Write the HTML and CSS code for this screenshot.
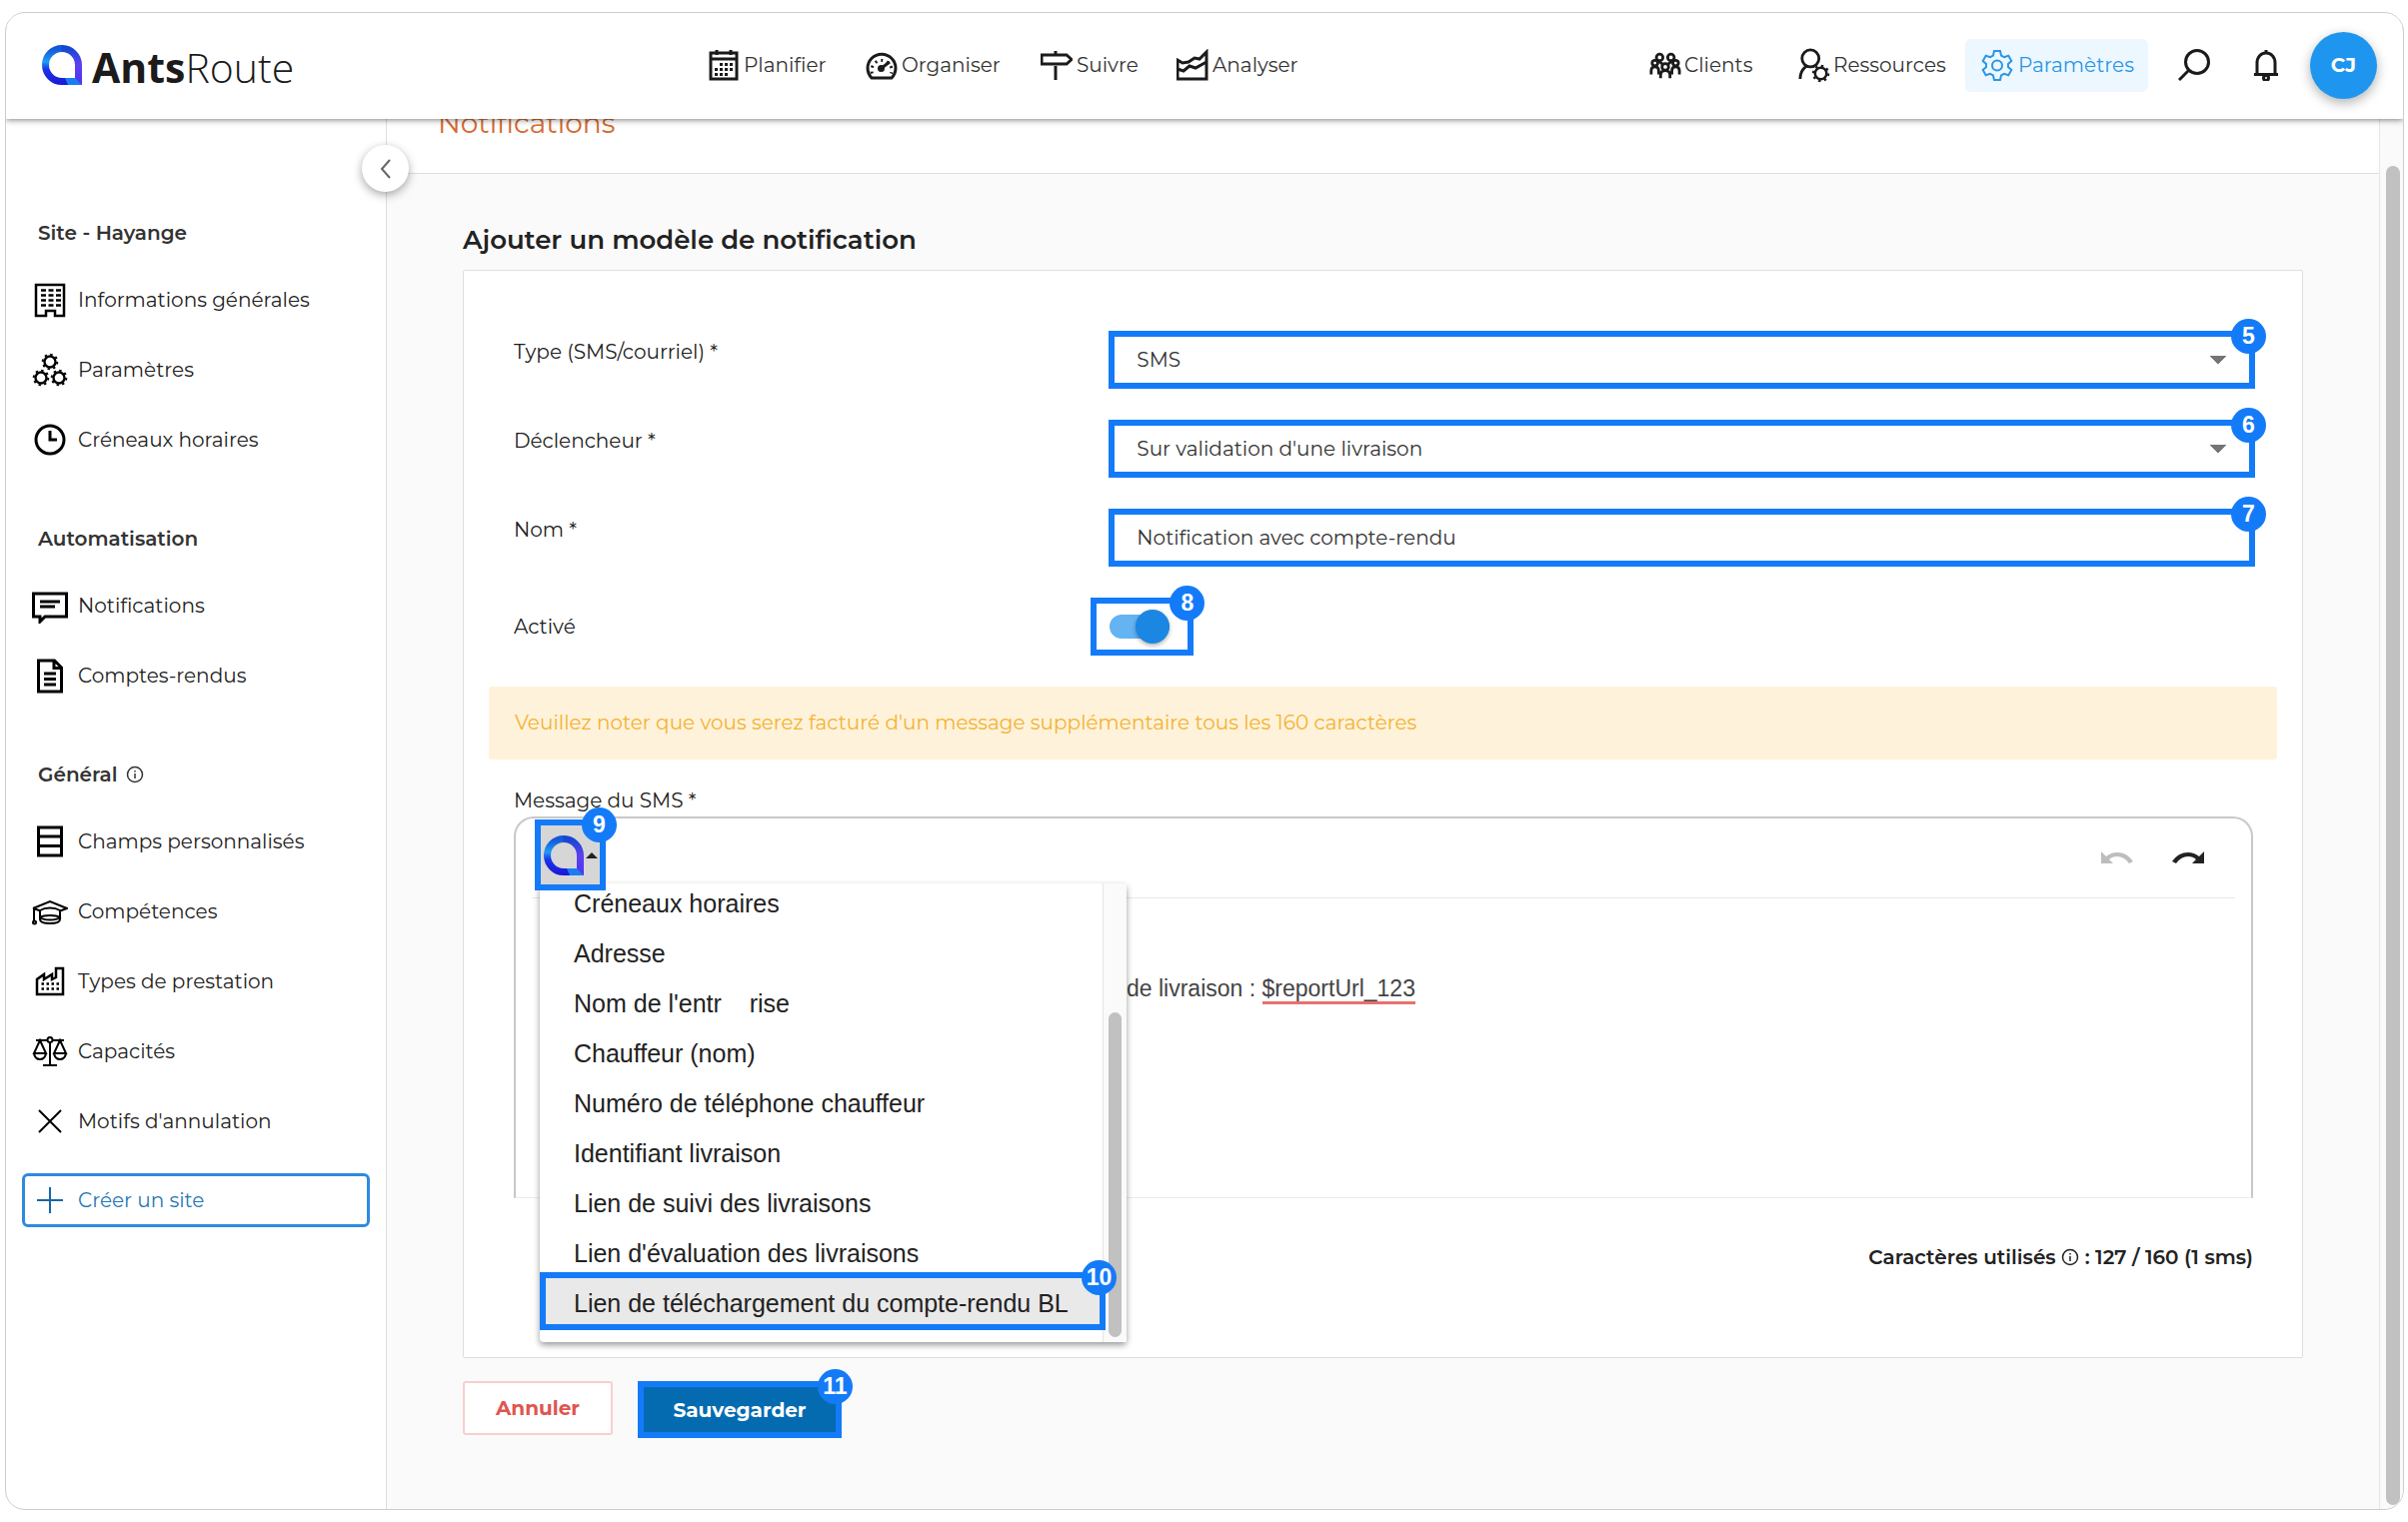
FILE: index.html
```html
<!DOCTYPE html>
<html lang="fr">
<head>
<meta charset="utf-8">
<meta name="viewport" content="width=device-width, initial-scale=1">
<title>AntsRoute - Notifications</title>
<link rel="stylesheet" href="styles.css">
</head>
<body>
<svg class="defs" aria-hidden="true">
  <defs>
    <linearGradient id="g-left" gradientUnits="userSpaceOnUse" x1="0" y1="0" x2="0" y2="40"><stop offset=".1" stop-color="#1557d8"/><stop offset=".42" stop-color="#1f9cf5"/><stop offset=".6" stop-color="#1a35e8"/><stop offset="1" stop-color="#1a18d8"/></linearGradient>
    <linearGradient id="g-right" gradientUnits="userSpaceOnUse" x1="0" y1="0" x2="0" y2="40"><stop offset=".1" stop-color="#1548d0"/><stop offset=".5" stop-color="#5f40f0"/><stop offset="1" stop-color="#4a35ee"/></linearGradient>
    <symbol id="mark" viewBox="0 0 40 40">
      <path d="M20 3.500A16.500 16.500 0 0 0 20 36.500H30" fill="none" stroke="url(#g-left)" stroke-width="7"/>
      <path d="M19.500 3.500A16.500 16.500 0 0 1 36.500 20V40" fill="none" stroke="url(#g-right)" stroke-width="7"/>
      <path d="M23 33H33L40 40H26Z" fill="#1c7df2" stroke="none"/>
    </symbol>
    <symbol id="gear" viewBox="0 0 32 32">
      <path d="M13 2h6l1 4.500 3 1.700 4.300-1.400 3 5.200-3.300 3v3l3.300 3-3 5.200-4.300-1.400-3 1.700-1 4.500h-6l-1-4.500-3-1.700-4.300 1.400-3-5.200L5 18v-3l-3.300-3 3-5.200L9 8.200l3-1.700z"/><circle cx="16" cy="16.500" r="5"/>
    </symbol>
    <symbol id="cog" viewBox="0 0 18 18">
      <circle cx="9" cy="9" r="5.500" stroke-width="2.400"/><circle cx="9" cy="9" r="7.300" stroke-width="2" stroke-dasharray="2.400 3.330"/>
    </symbol>
    <symbol id="info" viewBox="0 0 18 18"><circle cx="9" cy="9" r="7.500" stroke-width="1.500"/><path d="M9 8v5M9 5v1.500" stroke-width="1.500"/></symbol>
  </defs>
</svg>

<div class="frame">
  <header class="topbar">
    <a class="brand" href="#"><svg class="brand-mark"><use href="#mark"/></svg><span class="brand-name"><b>Ants</b>Route</span></a>
    <nav class="nav nav-main" aria-label="Principal">
      <a href="#"><svg class="ico" viewBox="0 0 32 32"><path d="M3 4h26v26H3zM3 10h26M9 1v5M23 1v5"/><path d="M12 15.500h14M7 20.500h19M7 25.500h14" stroke-dasharray="3 2"/></svg>Planifier</a>
      <a href="#"><svg class="ico" viewBox="0 0 32 32"><path d="M6 29A14 14 0 1 1 26 29Z"/><path d="M16 19l8-6" stroke-width="3"/><circle cx="15.500" cy="19.500" r="2" fill="currentColor"/><path d="M6.500 24.500A10 10 0 1 1 25.500 24.500" stroke-dasharray="2 4"/></svg>Organiser</a>
      <a href="#"><svg class="ico" viewBox="0 0 32 32"><path d="M1 6h25l5 4.500-5 4.500H1zM15 2v4M15 17v14"/></svg>Suivre</a>
      <a href="#"><svg class="ico" viewBox="0 0 32 32"><path d="M1 11v19h29V3l-7 7-5-1-6 4-6 1zM1 20l6 2 6-5 6 2 11-6"/></svg>Analyser</a>
    </nav>
    <nav class="nav nav-side" aria-label="Compte">
      <a href="#"><svg class="ico" viewBox="0 0 34 32"><circle cx="11" cy="8" r="3.500"/><circle cx="23" cy="8" r="3.500"/><circle cx="6" cy="14" r="3"/><circle cx="28" cy="14" r="3"/><circle cx="17" cy="18" r="3.500"/><path d="M2 26v-4q0-4 4-4t4 4v4M24 26v-4q0-4 4-4t4 4v4M12 30v-3q0-5 5-5t5 5v3M10 12l4 3M24 12l-4 3"/></svg>Clients</a>
      <a href="#"><svg class="ico ico-big" viewBox="0 0 34 38"><circle cx="13" cy="12" r="9"/><path d="M2 34q0-9 7-14"/><use href="#cog" x="14" y="18" width="20" height="20"/></svg>Ressources</a>
      <a href="#" class="active"><svg class="ico"><use href="#gear"/></svg>Paramètres</a>
    </nav>
    <div class="tools">
      <button type="button" aria-label="Rechercher"><svg class="ico" viewBox="0 0 32 32"><circle cx="19" cy="13" r="11.500"/><path d="M11 21L1 31" stroke-width="3"/></svg></button>
      <button type="button" aria-label="Alertes"><svg class="ico" viewBox="0 0 32 32"><path d="M7 25V14c0-6 4-10 9-10s9 4 9 10v11M4 25.500h24M16 1v3"/><circle cx="16" cy="29" r="2.500"/></svg></button>
      <button type="button" class="avatar">CJ</button>
    </div>
  </header>

  <div class="body">
    <aside class="sidebar">
      <section>
        <h2>Site - Hayange</h2>
        <a href="#"><svg viewBox="0 0 36 36"><path d="M4 3h28v31h-9v-5h-9v5H4z" stroke-width="2.500"/><path d="M9 8.500h20M9 13.500h20M9 18.500h20M9 23.500h20" stroke-width="2.500" stroke-dasharray="5 2.500"/></svg>Informations générales</a>
        <a href="#"><svg viewBox="0 0 36 36"><use href="#cog" x="9" y="1" width="18" height="18"/><use href="#cog" x="0" y="17" width="18" height="18"/><use href="#cog" x="18" y="17" width="18" height="18"/></svg>Paramètres</a>
        <a href="#"><svg viewBox="0 0 36 36"><circle cx="18" cy="18" r="14"/><path d="M18 9v9h7"/></svg>Créneaux horaires</a>
      </section>
      <section>
        <h2>Automatisation</h2>
        <a href="#"><svg viewBox="0 0 36 36"><path d="M1.500 6h33v23H13l-5 5v-5H1.500zM8 14h20M8 19h15"/></svg>Notifications</a>
        <a href="#"><svg viewBox="0 0 36 36"><path d="M6.500 3h16l7 7v24h-23zM22 3v7.500h7M12 16h12M12 21.500h12M12 27h12"/></svg>Comptes-rendus</a>
      </section>
      <section>
        <h2>Général <svg class="info"><use href="#info"/></svg></h2>
        <a href="#"><svg viewBox="0 0 36 36"><path d="M6.500 4h23v28h-23zM6.500 13h23M6.500 22.500h23"/></svg>Champs personnalisés</a>
        <a href="#"><svg viewBox="0 0 36 36" class="fine"><path d="M1 15L18 8l17 7-7 2.500M1 15l8 2.500M2 15v13M8 17v9q0 4 10 4t10-4v-9q-4-2.500-10-2.500T8 17M8 24q3-2 10-2t10 2q-3 2.500-10 2.500T8 24"/><circle cx="2.500" cy="29" r="1.500"/></svg>Compétences</a>
        <a href="#"><svg viewBox="0 0 36 36"><path d="M5 31V16l7-5v5l8-5v5l4-2V5h7v26z" stroke-width="2.500"/><path d="M9.500 20.500h18M9.500 25.500h18" stroke-width="2.500" stroke-dasharray="2.500 2.500"/></svg>Types de prestation</a>
        <a href="#"><svg viewBox="0 0 36 36" class="fine"><path d="M4 7h28M18 9v23M11 32h14M8 7L2 20h12zM28 7l-6 13h12zM2 20q1 6 6 6t6-6M22 20q1 6 6 6t6-6"/><circle cx="18" cy="6.500" r="2.500" fill="#fff"/></svg>Capacités</a>
        <a href="#"><svg viewBox="0 0 36 36" class="fine"><path d="M7 7l22 22M29 7L7 29"/></svg>Motifs d'annulation</a>
      </section>
      <a href="#" class="create"><svg viewBox="0 0 36 36" class="fine"><path d="M18 5v26M5 18h26"/></svg>Créer un site</a>
      <button type="button" class="collapse" aria-label="Replier"><svg viewBox="0 0 20 24"><path d="M14 3L6 12l8 9"/></svg></button>
    </aside>

    <main class="main">
      <div class="page-head"><h1>Notifications</h1></div>
      <form class="content">
        <h2 class="form-title">Ajouter un modèle de notification</h2>
        <div class="card">
          <div class="row">
            <label for="type">Type (SMS/courriel) *</label>
            <div class="mark-box"><select id="type"><option>SMS</option></select><span class="step">5</span></div>
          </div>
          <div class="row">
            <label for="trigger">Déclencheur *</label>
            <div class="mark-box"><select id="trigger"><option>Sur validation d'une livraison</option></select><span class="step">6</span></div>
          </div>
          <div class="row">
            <label for="name">Nom *</label>
            <div class="mark-box"><input type="text" id="name" value="Notification avec compte-rendu"><span class="step">7</span></div>
          </div>
          <div class="row row-toggle">
            <label for="enabled">Activé</label>
            <div class="mark-box toggle-box"><input type="checkbox" role="switch" class="switch" id="enabled" checked><span class="step">8</span></div>
          </div>
          <p class="alert">Veuillez noter que vous serez facturé d'un message supplémentaire tous les 160 caractères</p>
          <div class="message">
            <div class="message-label" id="msg-label">Message du SMS *</div>
            <div class="editor">
              <div class="toolbar">
                <div class="variables">
                  <button type="button" class="mark-box var-button" aria-label="Variables"><svg class="var-mark"><use href="#mark"/></svg><span class="caret"></span><span class="step">9</span></button>
                  <div class="menu">
                    <ul>
                      <li>Créneaux horaires</li>
                      <li>Adresse</li>
                      <li>Nom de l'entr&nbsp;&nbsp;&nbsp;&nbsp;rise</li>
                      <li>Chauffeur (nom)</li>
                      <li>Numéro de téléphone chauffeur</li>
                      <li>Identifiant livraison</li>
                      <li>Lien de suivi des livraisons</li>
                      <li>Lien d'évaluation des livraisons</li>
                      <li class="mark-box selected">Lien de téléchargement du compte-rendu BL<span class="step">10</span></li>
                    </ul>
                    <div class="menu-scroll"><span></span></div>
                  </div>
                </div>
                <div class="history">
                  <button type="button" class="off" aria-label="Annuler la saisie"><svg viewBox="0 0 32 14"><path d="M0 0l5 5q5-4 11-4 10 0 16 9l-4 2q-5-7-12-7-5 0-8 3l4 4H0z"/></svg></button>
                  <button type="button" aria-label="Rétablir la saisie"><svg viewBox="0 0 32 14"><path d="M32 0l-5 5q-5-4-11-4Q6 1 0 10l4 2q5-7 12-7 5 0 8 3l-4 4h12z"/></svg></button>
                </div>
              </div>
              <div class="text" contenteditable="true" spellcheck="false" role="textbox" aria-labelledby="msg-label">de livraison : <span class="typo">$reportUrl_123</span></div>
            </div>
            <p class="counter">Caractères utilisés <svg class="info"><use href="#info"/></svg> : 127 / 160 (1 sms)</p>
          </div>
        </div>
        <div class="actions">
          <button type="button" class="cancel">Annuler</button>
          <button type="submit" class="mark-box save">Sauvegarder<span class="step">11</span></button>
        </div>
      </form>
    </main>
    <div class="page-scroll"><span></span></div>
  </div>
</div>
</body>
</html>
```
FILE: styles.css
```css
:root {
  --accent: #147bf8;
  --ink: #222;
  --line: #dedede;
}

* { box-sizing: border-box; }

body {
  margin: 0;
  padding: 12px 4px 12px 5px;
  background: #fff;
  color: var(--ink);
  font: 20px/32px Montserrat, Inter, "Noto Sans", sans-serif;
}

h1, h2, p, ul { margin: 0; padding: 0; }
a { color: inherit; text-decoration: none; }
button, input, select { font: inherit; color: inherit; }
button { padding: 0; border: 0; background: none; }
svg { flex: none; fill: none; stroke: currentColor; stroke-width: 2; }
.defs { position: absolute; width: 0; height: 0; }

.frame {
  display: flex;
  flex-direction: column;
  min-height: calc(100vh - 24px);
  overflow: hidden;
  border: 1px solid #ccc;
  border-radius: 20px;
}

/* Top bar */
.topbar {
  position: relative;
  z-index: 2;
  display: flex;
  align-items: center;
  height: 106px;
  padding: 0 26px 2px 36px;
  background: #fff;
  box-shadow: 0 1px 6px rgba(0, 0, 0, .5);
}
.brand { display: flex; align-items: center; gap: 10px; width: 666px; }
.brand-mark { width: 40px; height: 40px; }
.brand-name { padding-top: 4px; font: 300 41px/48px "Open Sans", "Noto Sans", sans-serif; color: #1b1b1b; }
.brand-name b { font-weight: 700; }
.nav { display: grid; align-items: center; }
.nav-main { grid-template-columns: 158px 175px 136px 130px; }
.nav-side { grid-template-columns: 149px 167px 183px; margin-left: auto; }
.nav a { display: flex; align-items: center; gap: 4px; color: #333; }
.nav-side a { gap: 3px; }
.nav a svg, .tools svg { color: #1b1b1b; stroke-width: 3; }
.ico { width: 32px; height: 32px; }
.ico-big { height: 38px; }
.nav a.active {
  gap: 5px;
  height: 53px;
  padding-left: 16px;
  border-radius: 6px;
  background: #edf7ff;
  color: #2b96e5;
}
.nav a.active svg { color: #2b96e5; stroke-width: 2; }
.tools { display: flex; align-items: center; margin-left: 30px; }
.tools button { display: flex; margin-right: 40px; }
.tools .avatar {
  align-items: center;
  justify-content: center;
  width: 67px;
  height: 67px;
  margin-right: 0;
  margin-left: -12px;
  border-radius: 50%;
  background: #1e96f0;
  box-shadow: 0 4px 12px rgba(0, 0, 0, .3);
  color: #fff;
  font-weight: 700;
}

.body { display: flex; flex: 1; }

/* Sidebar */
.sidebar {
  position: relative;
  z-index: 1;
  flex: none;
  width: 381px;
  padding: 94px 16px 0;
  border-right: 1px solid var(--line);
}
.sidebar section { margin-bottom: 44px; }
.sidebar section:last-of-type { margin-bottom: 17px; }
.sidebar h2 {
  display: flex;
  align-items: center;
  gap: 8px;
  height: 40px;
  margin-bottom: 12px;
  padding-left: 16px;
  font-size: 20px;
  font-weight: 600;
  color: #333;
}
.sidebar a { display: flex; align-items: center; gap: 10px; height: 70px; padding-left: 10px; color: #222; }
.sidebar a svg { width: 36px; height: 36px; color: #000; stroke-width: 3; }
.sidebar a svg.fine { stroke-width: 2; }
.sidebar .info, .counter .info { width: 18px; height: 18px; }
.sidebar .create {
  height: 54px;
  padding-left: 7px;
  border: 3px solid #2d8ae0;
  border-radius: 6px;
  color: #1f78b8;
}
.sidebar .create svg { color: #1468a8; }
.collapse {
  position: absolute;
  top: 26px;
  right: -23px;
  display: flex;
  align-items: center;
  justify-content: center;
  width: 47px;
  height: 47px;
  border-radius: 50%;
  background: #fff;
  box-shadow: 0 3px 10px rgba(0, 0, 0, .35);
  color: #666;
}
.collapse svg { width: 20px; height: 24px; }

/* Main column */
.main { flex: 1; min-width: 0; background: #fafafa; }
.page-head {
  display: flex;
  align-items: flex-end;
  height: 55px;
  padding: 0 51px 32px;
  border-bottom: 1px solid var(--line);
  background: #fff;
}
.page-head h1 { font-size: 28px; font-weight: 400; line-height: 36px; color: #d66a30; }
.content { padding: 48px 76px 0; }
.form-title { margin-bottom: 12px; font-size: 26px; font-weight: 600; line-height: 36px; }
.card {
  padding: 60px 25px 84px;
  border: 1px solid var(--line);
  border-radius: 2px;
  background: #fff;
}
.row {
  display: grid;
  grid-template-columns: 595fr 1146fr;
  height: 58px;
  margin: 0 22px 31px 25px;
}
.row label { line-height: 42px; }
.row-toggle label { line-height: 58px; }

/* Numbered highlight boxes */
.mark-box { position: relative; border: 6px solid var(--accent); }
.step {
  position: absolute;
  z-index: 1;
  top: -18px;
  right: -17px;
  width: 35px;
  height: 35px;
  border-radius: 50%;
  background: var(--accent);
  color: #fff;
  font: 700 23px/35px "Liberation Sans", Arial, sans-serif;
  text-align: center;
}

.mark-box select, .mark-box input[type="text"] {
  display: block;
  width: 100%;
  height: 46px;
  padding: 0 22px;
  border: 0;
  outline: 0;
  background: #fff;
  color: #333;
}
.mark-box select {
  appearance: none;
  background: linear-gradient(to bottom left, #757575 50%, transparent 50%) right 31px center / 8px 9px no-repeat,
    linear-gradient(to bottom right, #757575 50%, transparent 50%) right 23px center / 8px 9px no-repeat, #fff;
}
.toggle-box { display: flex; align-items: center; width: 103px; margin-left: -18px; }
.switch {
  appearance: none;
  display: flex;
  align-items: center;
  justify-content: flex-end;
  width: 60px;
  height: 24px;
  margin: 0 0 0 13px;
  border-radius: 12px;
  background: #64b3f2;
}
.switch::before {
  content: "";
  width: 34px;
  height: 34px;
  border-radius: 50%;
  background: #1c87e3;
  box-shadow: 0 2px 4px rgba(0, 0, 0, .3);
}
.alert {
  margin-bottom: 25px;
  padding: 20px 26px 21px;
  border-radius: 3px;
  background: #fef3da;
  color: #f5b133;
}

/* Message editor */
.message { margin: 0 24px 0 25px; }
.editor {
  height: 382px;
  border: 2px solid #c8c8c8;
  border-bottom: 1px solid #ececec;
  border-radius: 20px 20px 0 0;
}
.toolbar {
  display: flex;
  justify-content: space-between;
  height: 80px;
  margin: 0 16px;
  border-bottom: 1px solid #e8e8e8;
}
.variables { position: relative; padding: 1px 3px; }
.var-button {
  z-index: 2;
  display: flex;
  align-items: center;
  width: 71px;
  height: 71px;
  padding-left: 3px;
  background: #d6d6d6;
}
.var-mark { width: 40px; height: 40px; }
.caret {
  border: 6px solid transparent;
  border-top: 0;
  border-bottom: 6px solid #222;
  margin-left: 2px;
}
.menu {
  position: absolute;
  z-index: 1;
  top: 65px;
  left: 8px;
  display: flex;
  width: 587px;
  height: 459px;
  border-radius: 4px;
  background: #fff;
  box-shadow: 0 3px 6px rgba(0, 0, 0, .4);
  font: 25px/50px "Liberation Sans", Arial, sans-serif;
}
.menu ul { flex: 1; margin-top: -5px; list-style: none; }
.menu li { padding-left: 34px; white-space: nowrap; }
.menu .selected {
  height: 58px;
  margin: -6px -3px 0 0;
  padding-left: 28px;
  background: #e9e9e9;
}
.menu-scroll {
  width: 24px;
  padding: 129px 5px 5px;
  border-left: 1px solid #e5e5e5;
  background: #fafafa;
}
.menu-scroll span, .page-scroll span { display: block; height: 100%; border-radius: 7px; background: #c1c1c1; }
.history { display: flex; gap: 39px; padding: 33px 31px 0 0; }
.history button { display: flex; align-self: flex-start; color: #222; }
.history .off { color: #bdbdbd; }
.history svg { width: 32px; height: 14px; fill: currentColor; stroke: none; }
.text {
  padding: 74px 20px 0 611px;
  outline: 0;
  font: 23px/32px "Liberation Sans", Arial, sans-serif;
  color: #444;
  white-space: nowrap;
}
.typo { border-bottom: 3px solid #e87070; }
.counter { margin-top: 43px; font-weight: 600; text-align: right; }
.counter .info { vertical-align: -2px; }

.actions { display: flex; gap: 25px; padding: 23px 0; }
.actions button { width: 150px; height: 54px; border-radius: 3px; font-weight: 700; }
.actions .cancel { border: 2px solid #f7cfcd; background: #fff; color: #e05550; }
.actions .save { width: 204px; height: 57px; border: 6px solid var(--accent); border-radius: 0; background: #056bb0; color: #fff; }

.page-scroll {
  width: 24px;
  padding: 47px 3px 4px 6px;
  border-left: 1px solid #e5e5e5;
  background: #fafafa;
}
```
